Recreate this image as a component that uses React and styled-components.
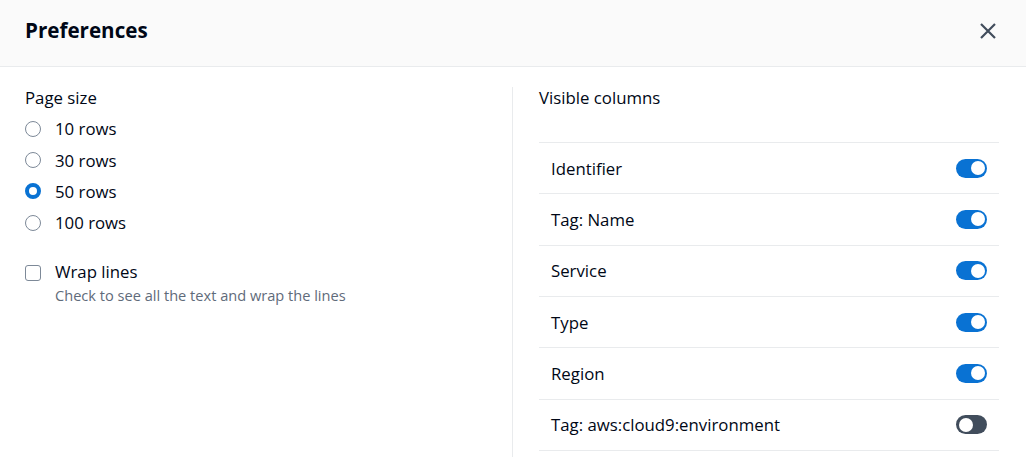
import React from "react";
import styled, { createGlobalStyle } from "styled-components";

const Global = createGlobalStyle`
  html, body { margin: 0; padding: 0; background: #fff; }
  body { font-family: "Open Sans", "Noto Sans", Arial, sans-serif; color: #000716; }
  * { box-sizing: border-box; }
`;

const Modal = styled.div`
  width: 1026px;
  height: 457px;
  overflow: hidden;
  background: #fff;
`;

const Header = styled.div`
  height: 67px;
  background: #fafafa;
  border-bottom: 1px solid #e9ebed;
  display: flex;
  align-items: flex-start;
  justify-content: space-between;
  padding: 17px 29px 0 25px;
`;

const Title = styled.h2`
  margin: 0;
  font-size: 20.6px;
  line-height: 26px;
  font-weight: 700;
  color: #000716;
`;

const CloseButton = styled.button`
  border: none;
  background: none;
  padding: 0;
  margin-top: 5px;
  width: 18px;
  height: 18px;
  display: flex;
  align-items: center;
  justify-content: center;
  color: #414d5c;
  cursor: pointer;
`;

const Body = styled.div`
  display: grid;
  grid-template-columns: 1fr 1fr;
  padding: 20px 27px 0 25px;
`;

const Column = styled.div`
  display: flex;
  flex-direction: column;
  min-height: 380px;
  ${(p) => p.$divided && `border-left: 1px solid #e9ebed; padding-left: 26px;`}
`;

const Label = styled.div`
  font-size: 16.8px;
  line-height: 22px;
  color: #000716;
`;

const RadioGroup = styled.div`
  display: flex;
  flex-direction: column;
  margin-top: 4px;
`;

const OptionRow = styled.label`
  display: flex;
  align-items: center;
  height: 31.4px;
  gap: 14px;
  font-size: 16.8px;
  color: #000716;
`;

const RadioCircle = styled.span`
  width: 16px;
  height: 16px;
  border-radius: 50%;
  flex: none;
  border: ${(p) => (p.$checked ? "4.5px solid #0972d3" : "1.5px solid #7d8998")};
  background: #fff;
`;

const CheckRow = styled.div`
  display: flex;
  gap: 14px;
  margin-top: 22px;
`;

const CheckBox = styled.span`
  width: 16px;
  height: 16px;
  margin-top: 4px;
  flex: none;
  border: 1.5px solid #7d8998;
  border-radius: 3px;
  background: #fff;
`;

const CheckText = styled.div`
  display: flex;
  flex-direction: column;
`;

const Description = styled.div`
  font-size: 14.6px;
  line-height: 24px;
  color: #5f6b7a;
`;

const List = styled.ul`
  list-style: none;
  margin: 33px 0 0;
  padding: 0;
  border-bottom: 1px solid #e9ebed;
`;

const Item = styled.li`
  height: 51.33px;
  border-top: 1px solid #e9ebed;
  display: flex;
  align-items: center;
  justify-content: space-between;
  padding: 0 12px 0 12px;
  font-size: 16.8px;
  color: #000716;
`;

const Toggle = styled.span`
  width: 31px;
  height: 19px;
  border-radius: 10px;
  background: ${(p) => (p.$on ? "#0972d3" : "#414d5c")};
  display: flex;
  align-items: center;
  justify-content: ${(p) => (p.$on ? "flex-end" : "flex-start")};
  padding: 0 2.5px;
  &::after {
    content: "";
    width: 14px;
    height: 14px;
    border-radius: 50%;
    background: #fff;
  }
`;

const sizes = [
  { label: "10 rows", checked: false },
  { label: "30 rows", checked: false },
  { label: "50 rows", checked: true },
  { label: "100 rows", checked: false },
];

const columns = [
  { label: "Identifier", on: true },
  { label: "Tag: Name", on: true },
  { label: "Service", on: true },
  { label: "Type", on: true },
  { label: "Region", on: true },
  { label: "Tag: aws:cloud9:environment", on: false },
];

export default function App() {
  return (
    <>
      <Global />
      <Modal>
        <Header>
          <Title>Preferences</Title>
          <CloseButton aria-label="Close">
            <svg width="18" height="18" viewBox="0 0 18 18">
              <path d="M2 2 L16 16 M16 2 L2 16" stroke="currentColor" strokeWidth="2.2" fill="none" />
            </svg>
          </CloseButton>
        </Header>
        <Body>
          <Column>
            <Label>Page size</Label>
            <RadioGroup>
              {sizes.map((s) => (
                <OptionRow key={s.label}>
                  <RadioCircle $checked={s.checked} />
                  {s.label}
                </OptionRow>
              ))}
            </RadioGroup>
            <CheckRow>
              <CheckBox />
              <CheckText>
                <Label>Wrap lines</Label>
                <Description>Check to see all the text and wrap the lines</Description>
              </CheckText>
            </CheckRow>
          </Column>
          <Column $divided>
            <Label>Visible columns</Label>
            <List>
              {columns.map((c) => (
                <Item key={c.label}>
                  {c.label}
                  <Toggle $on={c.on} />
                </Item>
              ))}
            </List>
          </Column>
        </Body>
      </Modal>
    </>
  );
}
